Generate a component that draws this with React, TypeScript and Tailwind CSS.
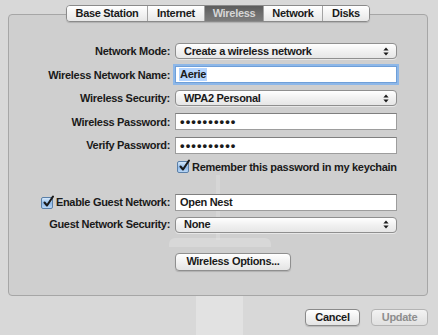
import React from "react";

function Arrows() {
  return (
    <svg width="6" height="9" viewBox="0 0 6 9" className="shrink-0">
      <path d="M3 0.5 L5.6 3.6 L0.4 3.6 Z" fill="#1a1a1a" />
      <path d="M3 8.5 L5.6 5.4 L0.4 5.4 Z" fill="#1a1a1a" />
    </svg>
  );
}

function Popup({ text }: { text: string }) {
  return (
    <div className="h-[16px] w-[222px] flex items-center justify-between pl-[8px] pr-[7px] rounded-[4px] border border-[#8f8f8f] bg-[linear-gradient(#ffffff,#f1f1f1_50%,#e6e6e6)] shadow-[0_1px_0_rgba(255,255,255,0.5)]">
      <span className="leading-none">{text}</span>
      <Arrows />
    </div>
  );
}

function Field({ text, focus, dots }: { text: string; focus?: boolean; dots?: boolean }) {
  return (
    <div
      className={
        "h-[17px] w-[222px] flex items-center pl-[3px] bg-white border " +
        (focus
          ? "border-[#6f9fd8] shadow-[0_0_0_2px_#8db7e8]"
          : "border-[#9d9d9d] border-t-[#7f7f7f]")
      }
    >
      {dots ? (
        <span className="text-[13px] tracking-[1.1px] leading-none pl-[1px]">••••••••••</span>
      ) : focus ? (
        <span className="bg-[#b5d5ff] leading-[13px] px-[1px]">{text}</span>
      ) : (
        <span className="leading-none pl-[1px]">{text}</span>
      )}
    </div>
  );
}

function Check() {
  return (
    <div className="w-[12px] h-[12px] rounded-[2px] border border-[#5a7fa8] bg-[linear-gradient(#d5e8fa,#8fbaea_55%,#b8d6f5)] relative shrink-0">
      <svg width="13" height="13" viewBox="0 0 13 13" className="absolute left-[0px] top-[-3px]">
        <path d="M2.5 7.5 L5 10.5 L11 1.5" stroke="#1b1b1b" strokeWidth="2.1" fill="none" strokeLinecap="round" strokeLinejoin="round" />
      </svg>
    </div>
  );
}

function Row({ label, children, h }: { label: React.ReactNode; children: React.ReactNode; h: string }) {
  return (
    <div className={"grid grid-cols-[161px_222px] gap-x-[5px] items-center " + h}>
      <div className="text-right">{label}</div>
      <div>{children}</div>
    </div>
  );
}

const tabs = [
  { t: "Base Station", w: "w-[80px]" },
  { t: "Internet", w: "w-[57px]" },
  { t: "Wireless", w: "w-[59px]", sel: true },
  { t: "Network", w: "w-[59px]" },
  { t: "Disks", w: "w-[47px]" },
];

export default function App() {
  return (
    <div className="w-[438px] h-[335px] relative overflow-hidden bg-[#d8d8d8] pt-[14px] pl-[8px] pr-[10px] font-['Liberation_Sans',Arial,sans-serif] text-[11px] font-bold tracking-[-0.3px] text-[#1a1a1a]">
      {/* faint background reflection */}
      <div className="absolute left-[196px] top-[282px] w-[47px] h-[60px] rounded-[4px] bg-white/25" />
      <div className="relative h-[282px] rounded-[4px] border border-[#a6a6a6] bg-[#cfcfcf]">
        <div className="absolute left-[160px] top-[223px] w-[102px] h-[9px] rounded-t-[6px] bg-white/20" />
        <div className="absolute left-[207px] top-[160px] w-[4px] h-[65px] bg-white/15" />
        <div className="flex justify-center -mt-[10px]">
          <div className="flex h-[17px] rounded-[4px] border border-[#8a8a8a] overflow-hidden shadow-[0_1px_1px_rgba(0,0,0,0.15)]">
            {tabs.map((tb, i) => (
              <div
                key={tb.t}
                className={
                  "flex items-center justify-center " +
                  tb.w +
                  (i > 0 ? " border-l border-[#a3a3a3]" : "") +
                  (tb.sel
                    ? " bg-[linear-gradient(#5c5c5c,#6e6e6e_50%,#7c7c7c)] text-[#d6d6d6]"
                    : " bg-[linear-gradient(#ffffff,#f3f3f3_50%,#e7e7e7)]")
                }
              >
                {tb.t}
              </div>
            ))}
          </div>
        </div>

        <div className="relative mt-[17.5px] flex flex-col">
          <Row label="Network Mode:" h="h-[23.5px]">
            <Popup text="Create a wireless network" />
          </Row>
          <Row label="Wireless Network Name:" h="h-[23.5px]">
            <Field text="Aerie" focus />
          </Row>
          <Row label="Wireless Security:" h="h-[23.5px]">
            <Popup text="WPA2 Personal" />
          </Row>
          <Row label="Wireless Password:" h="h-[23.5px]">
            <Field text="" dots />
          </Row>
          <Row label="Verify Password:" h="h-[23.5px]">
            <Field text="" dots />
          </Row>
          <Row label="" h="h-[20px]">
            <div className="flex items-center gap-[3px] pl-[2px]">
              <Check />
              <span>Remember this password in my keychain</span>
            </div>
          </Row>
          <div className="h-[14.5px]" />
          <Row
            label={
              <div className="flex items-center justify-end gap-[3px]">
                <Check />
                <span>Enable Guest Network:</span>
              </div>
            }
            h="h-[22px]"
          >
            <Field text="Open Nest" />
          </Row>
          <Row label="Guest Network Security:" h="h-[22px]">
            <Popup text="None" />
          </Row>
          <div className="h-[17px]" />
          <Row label="" h="h-[18px]">
            <div className="w-[116px] h-[18px] flex items-center justify-center rounded-[4px] border border-[#8f8f8f] bg-[linear-gradient(#ffffff,#f1f1f1_50%,#e4e4e4)] shadow-[0_1px_1px_rgba(0,0,0,0.15)]">
              Wireless Options...
            </div>
          </Row>
        </div>
      </div>

      <div className="flex justify-end gap-[11px] mt-[13px]">
        <div className="w-[55px] h-[17px] flex items-center justify-center rounded-[4px] border border-[#8a8a8a] bg-[linear-gradient(#ffffff,#f1f1f1_50%,#e4e4e4)] shadow-[0_1px_1px_rgba(0,0,0,0.15)]">
          Cancel
        </div>
        <div className="w-[57px] h-[17px] flex items-center justify-center rounded-[4px] border border-[#b4b4b4] bg-[linear-gradient(#f3f3f3,#e9e9e9_50%,#e0e0e0)] text-[#8e8e8e]">
          Update
        </div>
      </div>
    </div>
  );
}
